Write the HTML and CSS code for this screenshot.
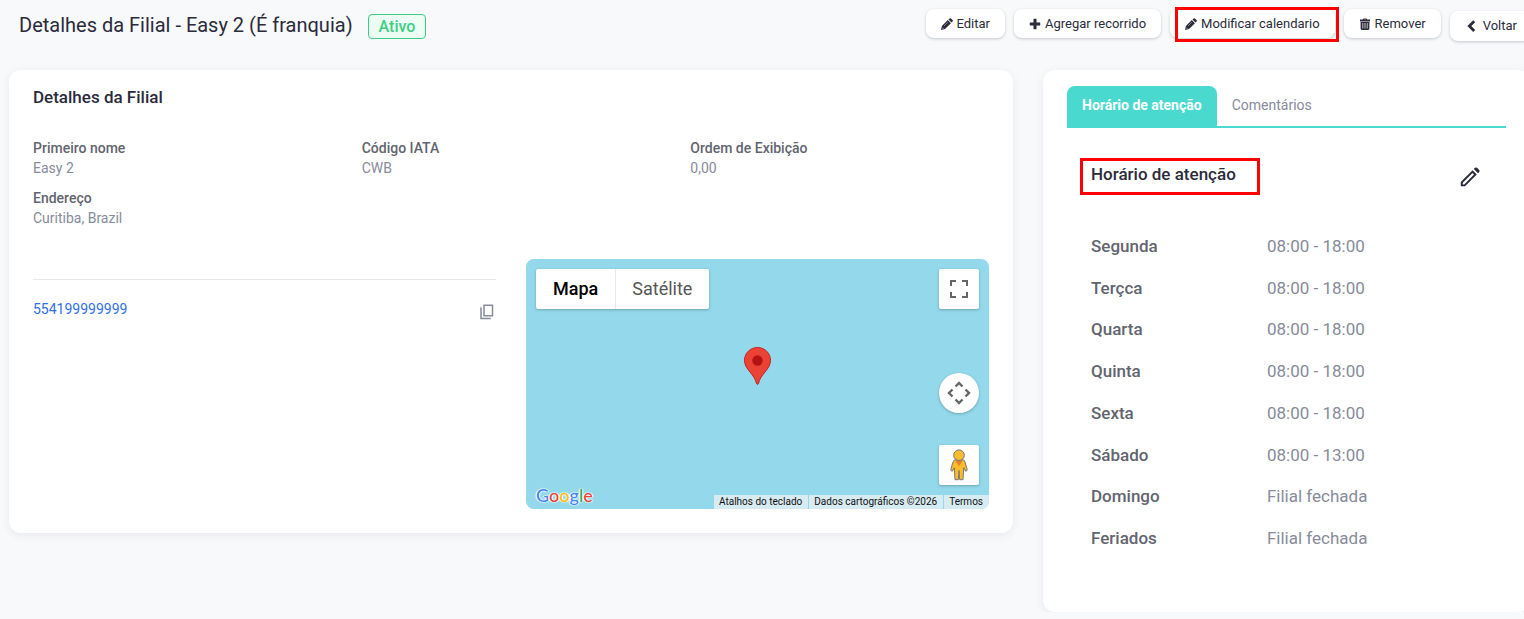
FILE: index.html
```html
<!DOCTYPE html>
<html lang="pt">
<head>
<meta charset="utf-8">
<meta name="viewport" content="width=device-width, initial-scale=1">
<title>Detalhes da Filial</title>
<link rel="stylesheet" href="styles.css">
</head>
<body>
<div class="page">
  <header class="page-header">
    <h1 class="page-title">Detalhes da Filial - Easy 2 (É franquia)</h1>
    <span class="badge">Ativo</span>
    <div class="actions">
      <button class="btn" type="button">
        <svg class="icon" viewBox="0 0 12 12"><path d="M0 12 .9 8 6.800 2.100 9.900 5.200 4 11.100zM7.500 1.500 8.600.4Q9.300-.1 9.900.4L11.600 2.100Q12.100 2.700 11.600 3.400L10.500 4.500z"/><path d="M3 8 6.900 4.100" stroke="#fff" stroke-width=".4"/><path d="M1.300 9.700 2.300 10.700" stroke="#fff" stroke-width=".7"/></svg>
        Editar
      </button>
      <button class="btn" type="button">
        <svg class="icon" viewBox="0 0 12 12"><path d="M4.500.8h3v3.700h3.700v3H7.500v3.700h-3V7.500H.8v-3h3.700z"/></svg>
        Agregar recorrido
      </button>
      <div class="marked">
        <button class="btn" type="button">
          <svg class="icon" viewBox="0 0 12 12"><path d="M0 12 .9 8 6.800 2.100 9.900 5.200 4 11.100zM7.500 1.500 8.600.4Q9.300-.1 9.900.4L11.600 2.100Q12.100 2.700 11.600 3.400L10.500 4.500z"/><path d="M3 8 6.900 4.100" stroke="#fff" stroke-width=".4"/><path d="M1.300 9.700 2.300 10.700" stroke="#fff" stroke-width=".7"/></svg>
          Modificar calendario
        </button>
        <span class="marker marker-button"></span>
      </div>
      <button class="btn" type="button">
        <svg class="icon" viewBox="0 0 12 12"><path fill-rule="evenodd" d="M1 1.600h2.800L4.500.4h3l.7 1.200H11v1.900H1zM4.900 1.600h2.200l-.2-.4H5.100zM1.600 3.900h8.800v6.700q0 1.300-1.300 1.300H2.900q-1.300 0-1.300-1.300zM3.500 5v5.400h.7V5zm2.150 0v5.400h.7V5zm2.150 0v5.400h.7V5z"/></svg>
        Remover
      </button>
      <a class="btn btn-back" href="#">
        <svg class="icon" viewBox="0 0 12 12"><path d="M8.200.3 10.200 2.300 6.300 6.100 10.200 9.900 8.200 11.900 2.400 6.100z"/></svg>
        Voltar
      </a>
    </div>
  </header>

  <main class="columns">
    <section class="card card-details">
      <h2 class="card-title">Detalhes da Filial</h2>
      <dl class="fields">
        <div><dt>Primeiro nome</dt><dd>Easy 2</dd></div>
        <div><dt>Código IATA</dt><dd>CWB</dd></div>
        <div><dt>Ordem de Exibição</dt><dd>0,00</dd></div>
        <div><dt>Endereço</dt><dd>Curitiba, Brazil</dd></div>
      </dl>
      <div class="lower">
        <div class="contact">
          <a class="phone" href="tel:554199999999">554199999999</a>
          <button class="icon-btn copy" type="button" aria-label="Copiar">
            <svg width="14" height="16" viewBox="0 0 14 16" fill="none" stroke="#878b9a" stroke-width="1.5"><path d="M4 1.3h8.500v10.400H4zM1 3.200v11.300h9.800"/></svg>
          </button>
        </div>
        <div class="map">
          <div class="map-types">
            <button class="map-type active" type="button">Mapa</button>
            <button class="map-type" type="button">Satélite</button>
          </div>
          <button class="map-ctl fullscreen" type="button" aria-label="Tela cheia">
            <svg width="20" height="20" viewBox="0 0 20 20" fill="none" stroke="#666" stroke-width="2"><path d="M2 7V2h5M13 2h5v5M18 13v5h-5M7 18H2v-5"/></svg>
          </button>
          <svg class="pin" width="27" height="38" viewBox="0 0 27 38"><path d="M13.500.5C6.300.5.5 6.200.5 13.300c0 4.800 2.400 7.800 5.500 11.700 3.400 4.200 5.600 7.400 6.400 11.200.3 1.500 1.900 1.500 2.200 0 .8-3.800 3-7 6.400-11.200 3.100-3.900 5.500-6.900 5.500-11.700C26.500 6.200 20.700.5 13.500.5z" fill="#ea4335" stroke="#c5221f"/><circle cx="13.500" cy="13.500" r="5.200" fill="#b31412"/></svg>
          <button class="map-ctl camera" type="button" aria-label="Controles da câmera">
            <svg width="24" height="24" viewBox="0 0 24 24" fill="none" stroke="#666" stroke-width="2.400"><path d="M8.500 5.500 12 2l3.500 3.500M8.500 18.500 12 22l3.500-3.500M5.500 8.500 2 12l3.500 3.500M18.500 8.500 22 12l-3.500 3.500"/></svg>
          </button>
          <button class="map-ctl pegman" type="button" aria-label="Street View">
            <svg width="18" height="32" viewBox="0 0 18 32"><path d="M5.500 10.500h7q2.100.3 2.800 3.500l1.900 6.500q.1 1.700-1.500 1.700l-2-3.500-.7 12H9.700L9 21.500l-.7 9.200H5l-.7-12-2 3.500Q.7 22.200.8 20.500L2.700 14q.7-3.200 2.800-3.500z" fill="#fbbc2c" stroke="#777" stroke-width="1"/><path d="M5 11h8l-4 6.300z" fill="#e8812e"/><circle cx="9" cy="6.200" r="5.300" fill="#fbbc2c" stroke="#777"/></svg>
          </button>
          <span class="google"><span class="g-blue">G</span><span class="g-red">o</span><span class="g-yellow">o</span><span class="g-blue">g</span><span class="g-green">l</span><span class="g-red">e</span></span>
          <div class="map-legal">
            <button type="button">Atalhos do teclado</button>
            <span>Dados cartográficos ©2026</span>
            <a href="#">Termos</a>
          </div>
        </div>
      </div>
    </section>

    <section class="card card-hours">
      <div class="tabs" role="tablist">
        <button class="tab active" type="button" role="tab" aria-selected="true">Horário de atenção</button>
        <button class="tab" type="button" role="tab" aria-selected="false">Comentários</button>
      </div>
      <div class="panel">
        <div class="panel-head">
          <div class="marked">
            <h3 class="panel-title">Horário de atenção</h3>
            <span class="marker marker-title"></span>
          </div>
          <button class="icon-btn" type="button" aria-label="Editar horário">
            <svg width="20" height="20" viewBox="0 0 20 20"><path fill="#2b2b3b" fill-rule="evenodd" d="M.8 19.300V15L12.600 3.200l4.200 4.200L5 19.300zM2.800 17.400h1.400l9.800-9.800-1.500-1.500-9.700 9.700zM13.800 2l1.200-1.200q1-.8 2 0L19.200 3q.8 1 0 2L18 6.200z"/></svg>
          </button>
        </div>
        <table class="hours">
          <tbody>
            <tr><th scope="row">Segunda</th><td>08:00 - 18:00</td></tr>
            <tr><th scope="row">Terçca</th><td>08:00 - 18:00</td></tr>
            <tr><th scope="row">Quarta</th><td>08:00 - 18:00</td></tr>
            <tr><th scope="row">Quinta</th><td>08:00 - 18:00</td></tr>
            <tr><th scope="row">Sexta</th><td>08:00 - 18:00</td></tr>
            <tr><th scope="row">Sábado</th><td>08:00 - 13:00</td></tr>
            <tr><th scope="row">Domingo</th><td>Filial fechada</td></tr>
            <tr><th scope="row">Feriados</th><td>Filial fechada</td></tr>
          </tbody>
        </table>
      </div>
    </section>
  </main>
</div>
</body>
</html>
```
FILE: styles.css
```css
* { box-sizing: border-box; }

body {
  margin: 0;
  overflow-x: hidden;
  background: #f8f9fb;
  color: #2b2b3b;
  font: 14px/20px Roboto, sans-serif;
}

button { font: inherit; color: inherit; border: 0; background: none; padding: 0; cursor: pointer; }
a { text-decoration: none; color: inherit; }
h1, h2, h3, dl, dd { margin: 0; }
svg { display: block; }

.page { margin: 0 -6px 0 9px; }

/* Header */
.page-header {
  display: flex;
  align-items: flex-start;
  height: 70px;
  padding-left: 10px;
}
.page-title { margin-top: 10px; font-size: 20px; line-height: 30px; font-weight: 400; white-space: nowrap; }
.badge {
  margin: 14px 0 0 15px;
  padding: 0 10px;
  border: 1px solid #3ccf85;
  border-radius: 4px;
  background: #edfdf4;
  color: #3ccf85;
  font-size: 16px;
  line-height: 23px;
  font-weight: 500;
}
.actions { display: flex; align-items: flex-start; gap: 9px; margin: 9px -2px 0 auto; }
.btn {
  display: flex;
  align-items: center;
  gap: 4px;
  height: 29px;
  padding: 0 15px;
  border-radius: 8px;
  background: #fff;
  box-shadow: 0 1px 3px rgba(40, 50, 70, .25);
  font-size: 13px;
  line-height: 18px;
  white-space: nowrap;
}
.btn-back { height: 30px; margin-top: 2px; gap: 6px; }
.icon { width: 12px; height: 12px; fill: #2b2b3b; }
.marked { position: relative; }
.marker { position: absolute; border: 3px solid #f00; pointer-events: none; z-index: 2; }
.marker-button { inset: -2px -4px -4px 5px; }
.marker-title { inset: -5px -24px -10px -11px; }

/* Cards */
.columns { display: grid; grid-template-columns: 1004fr 487fr; gap: 30px; align-items: start; }
.card {
  border-radius: 12px;
  background: #fff;
  box-shadow: 0 2px 8px rgba(40, 50, 70, .08);
}
.card-details { padding: 16px 24px 24px; }
.card-title { font-size: 17px; line-height: 22px; font-weight: 500; }
.fields { display: grid; grid-template-columns: repeat(3, 1fr); row-gap: 10px; margin: 30px -30px 0 0; }
.fields dt { color: #62656e; font-weight: 500; }
.fields dd { color: #878b9a; }
.lower { display: grid; grid-template-columns: 1fr 1fr; gap: 30px; margin-top: 31px; }
.contact {
  display: flex;
  justify-content: space-between;
  align-items: flex-start;
  align-self: start;
  margin-top: 20px;
  padding-top: 19px;
  border-top: 1px solid #e9eaee;
}
.phone { color: #2f6fe4; }
.icon-btn { line-height: 0; }
.copy { margin: 5px 2px 0 0; }

/* Map */
.map {
  position: relative;
  height: 250px;
  overflow: hidden;
  border-radius: 8px;
  background: #93d9eb;
}
.map-types {
  position: absolute;
  top: 10px;
  left: 10px;
  display: flex;
  border-radius: 2px;
  background: #fff;
  box-shadow: 0 1px 3px rgba(0, 0, 0, .25);
}
.map-type { height: 40px; padding: 0 17px; color: #565656; font-size: 18px; }
.map-type.active { color: #000; font-weight: 500; }
.map-type + .map-type { box-shadow: inset 1px 0 #e8e8e8; }
.map-ctl {
  position: absolute;
  right: 10px;
  display: grid;
  place-items: center;
  width: 40px;
  height: 40px;
  border-radius: 2px;
  background: #fff;
  box-shadow: 0 1px 3px rgba(0, 0, 0, .25);
}
.fullscreen { top: 10px; }
.camera { bottom: 96px; border-radius: 50%; }
.pegman { bottom: 24px; }
.pin { position: absolute; top: 88px; left: calc(50% - 14px); }
.google {
  position: absolute;
  bottom: 3px;
  left: 10px;
  font: 500 18px/22px Lato, sans-serif;
  text-shadow: 0 0 1px #fff, 0 0 2px #fff, 1px 0 1px #fff, -1px 0 1px #fff;
}
.g-blue { color: #4285f4; }
.g-red { color: #ea4335; }
.g-yellow { color: #fbbc05; }
.g-green { color: #34a853; }
.map-legal {
  position: absolute;
  right: 0;
  bottom: 0;
  display: flex;
  gap: 1px;
  color: #111;
  font-size: 10px;
  line-height: 14px;
}
.map-legal > * { padding: 0 6px 0 5px; background: #d7ebf2; }

/* Opening hours */
.card-hours { min-height: 542px; padding: 16px 24px 24px; }
.tabs { display: flex; border-bottom: 2px solid #49d9ce; }
.tab { height: 40px; padding: 0 15px 2px; border-radius: 8px 8px 0 0; color: #878b9a; }
.tab.active { background: #49d9ce; color: #fff; font-weight: 700; }
.panel { padding: 35px 24px 0; }
.panel-head { display: flex; justify-content: space-between; align-items: flex-start; }
.panel-head .icon-btn { margin: 4px 2px 0 0; }
.panel-title { font-size: 17px; line-height: 22px; font-weight: 500; }
.hours {
  width: 100%;
  height: 334px;
  margin-top: 38px;
  border-collapse: collapse;
  font-size: 17px;
  line-height: 24px;
}
.hours th { width: 45%; padding: 0; text-align: left; font-weight: 500; color: #62656e; }
.hours td { padding: 0; color: #878b9a; }
```
